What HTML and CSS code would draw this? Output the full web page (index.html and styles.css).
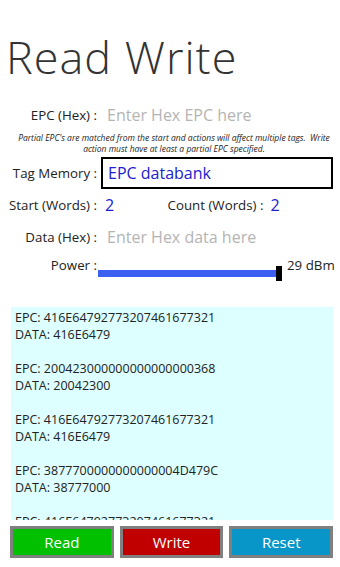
FILE: index.html
```html
<!DOCTYPE html>
<html lang="en">

<head>
  <meta charset="UTF-8">
  <meta name="viewport" content="width=device-width, initial-scale=1.0">
  <title>Read Write</title>
  <link rel="stylesheet" href="styles.css">
</head>

<body>
  <div class="page">
    <h1 class="title">Read Write</h1>

    <div class="row row-epc">
      <span class="label">EPC (Hex) :</span>
      <span class="hint">Enter Hex EPC here</span>
    </div>

    <p class="note">Partial EPC's are matched from the start and actions will affect multiple tags.&nbsp; Write action must have at least a partial EPC specified.</p>

    <div class="row row-mem">
      <span class="label">Tag Memory :</span>
      <div class="select">EPC databank</div>
    </div>

    <div class="row row-words">
      <span class="label">Start (Words) :</span>
      <span class="num">2</span>
      <span class="label count">Count (Words) :</span>
      <span class="num">2</span>
    </div>

    <div class="row row-data">
      <span class="label">Data (Hex) :</span>
      <span class="hint">Enter Hex data here</span>
    </div>

    <div class="row row-power">
      <span class="label">Power :</span>
      <div class="slider">
        <div class="track"></div>
        <div class="thumb"></div>
      </div>
      <span class="dbm">29 dBm</span>
    </div>

    <div class="tagList">
      <div class="tagItem">EPC: 416E64792773207461677321<br>DATA: 416E6479</div>
      <div class="tagItem">EPC: 200423000000000000000368<br>DATA: 20042300</div>
      <div class="tagItem">EPC: 416E64792773207461677321<br>DATA: 416E6479</div>
      <div class="tagItem">EPC: 3877700000000000004D479C<br>DATA: 38777000</div>
      <div class="tagItem">EPC: 416E64792773207461677321<br>DATA: 416E6479</div>
    </div>

    <div class="buttons">
      <button class="btn btn-read">Read</button>
      <button class="btn btn-write">Write</button>
      <button class="btn btn-reset">Reset</button>
    </div>
  </div>
</body>

</html>
```

FILE: styles.css
```css
* {
  margin: 0;
  padding: 0;
  box-sizing: border-box;
  font-family: "Open Sans", "Noto Sans", Arial, sans-serif;
}

body {
  background: #fff;
  color: #222;
}

.page {
  width: 340px;
  height: 567px;
  padding: 0 7px 0 11px;
  overflow: hidden;
}

.title {
  font-size: 45px;
  font-weight: 300;
  line-height: 52px;
  color: #333;
  margin: 31px 0 0 -5px;
  letter-spacing: 1px;
}

.row {
  display: flex;
  align-items: center;
}

.label {
  width: 86px;
  display: flex;
  justify-content: flex-end;
  font-size: 13.3px;
  color: #222;
  white-space: nowrap;
  flex-shrink: 0;
}

.hint {
  font-size: 16px;
  color: #b4b4b4;
  margin-left: 10px;
}

.row-epc {
  height: 26px;
  margin-top: 19px;
}

.note {
  font-size: 8.5px;
  font-style: italic;
  line-height: 11px;
  text-align: center;
  color: #222;
  margin: 4px 0 0 4px;
}

.row-mem {
  margin-top: 3px;
}

.select {
  margin-left: 4px;
  width: 232px;
  height: 32px;
  border: 2px solid #000;
  font-size: 16px;
  line-height: 28px;
  padding-left: 5px;
  color: #2020d0;
}

.row-words {
  height: 30px;
  margin-top: 1px;
}

.num {
  font-size: 16px;
  color: #2020d0;
  margin-left: 8px;
  width: 64px;
}

.count {
  width: auto;
}

.row-words .num:last-child {
  margin-left: 7px;
}

.row-data {
  height: 30px;
  margin-top: 2px;
}

.row-power {
  height: 24px;
  margin-top: 3px;
  align-items: flex-start;
}

.row-power .label {
  line-height: 20px;
}

.slider {
  position: relative;
  width: 185px;
  height: 24px;
  margin-left: 1px;
  flex-shrink: 0;
}

.track {
  position: absolute;
  left: 0;
  top: 15px;
  width: 180px;
  height: 7px;
  background: #3b5ff0;
}

.thumb {
  position: absolute;
  left: 178px;
  top: 11px;
  width: 6px;
  height: 15px;
  background: #000;
}

.dbm {
  font-size: 13.3px;
  line-height: 20px;
  margin-left: 4px;
  white-space: nowrap;
}

.tagList {
  margin-top: 28px;
  height: 213px;
  background: #ddffff;
  padding: 2px 0 0 4px;
  overflow: hidden;
}

.tagItem {
  font-size: 12.5px;
  line-height: 17px;
  color: #222;
  margin-bottom: 17px;
  white-space: nowrap;
}

.buttons {
  display: flex;
  gap: 6px;
  margin: 6px 0 0 -1px;
}

.btn {
  flex: 1;
  height: 32px;
  border: 3px solid #808080;
  color: #fff;
  font-size: 15px;
}

.btn-read {
  background: #00c000;
}

.btn-write {
  background: #c00000;
}

.btn-reset {
  background: #0896c8;
}
```
